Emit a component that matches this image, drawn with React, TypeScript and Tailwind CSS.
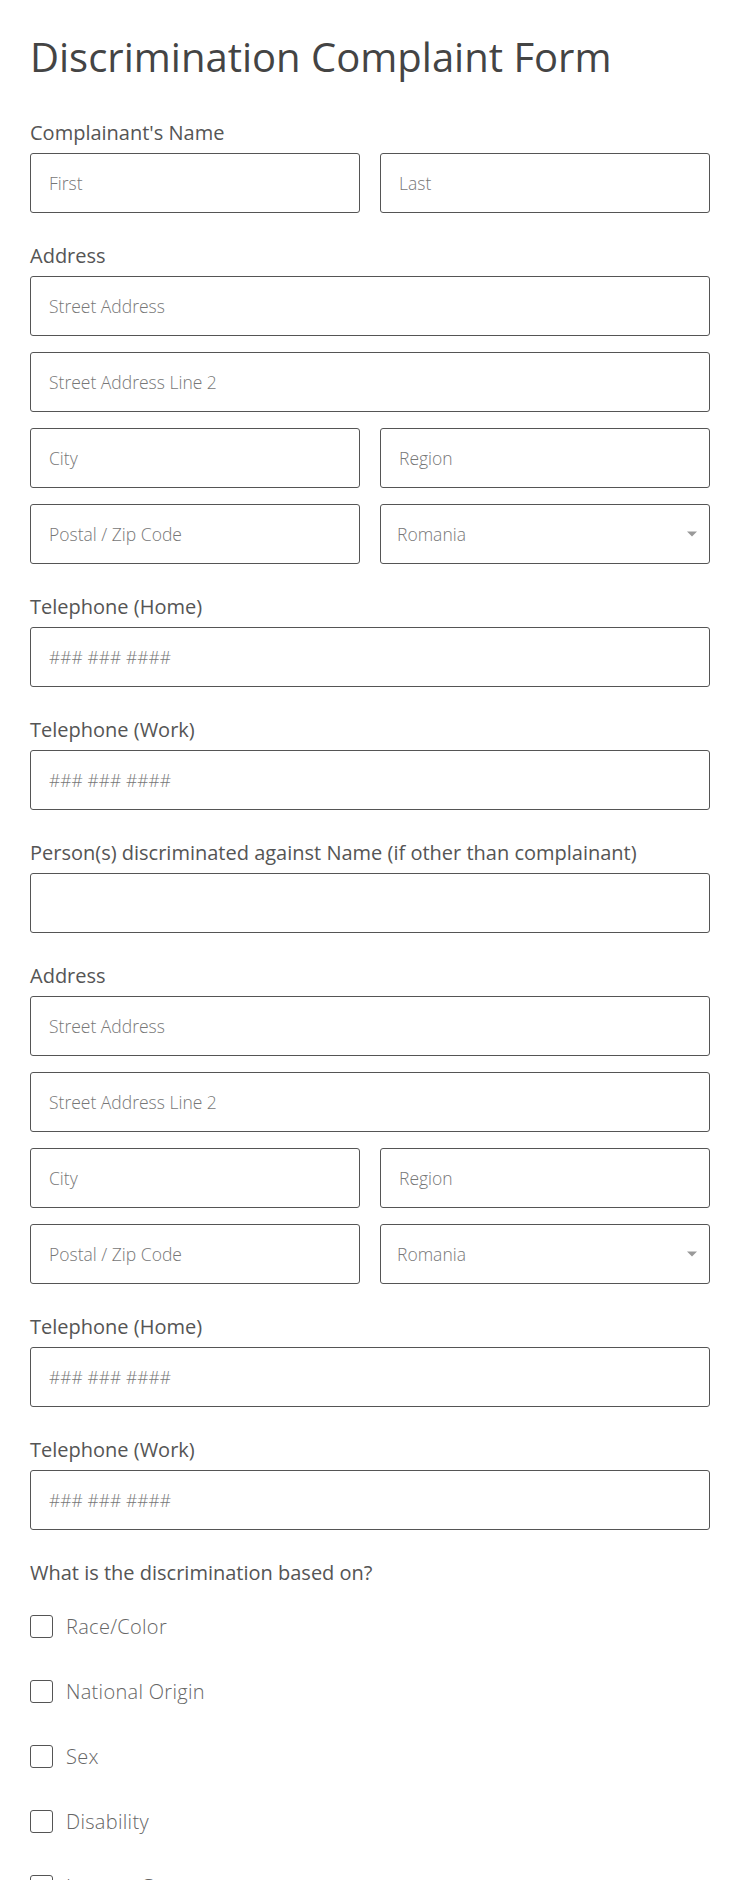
import React from 'react';

const labelFont = { fontFamily: '"Open Sans", "Noto Sans", sans-serif' };

const Label: React.FC<{ children: React.ReactNode }> = ({ children }) => (
  <div className="text-[20px] leading-6 text-[#555] mb-[8px]" style={labelFont}>
    {children}
  </div>
);

const Input: React.FC<{ placeholder?: string }> = ({ placeholder }) => (
  <input
    type="text"
    placeholder={placeholder}
    className="w-full h-[60px] px-[18px] border border-[#555] rounded-[3px] bg-white text-[17.5px] font-light text-[#555] placeholder:text-[#777] outline-none"
    style={labelFont}
  />
);

const CountrySelect: React.FC = () => (
  <div className="relative">
    <select
      defaultValue="Romania"
      className="w-full h-[60px] px-[16px] border border-[#555] rounded-[3px] bg-white text-[17.5px] font-light text-[#777] appearance-none outline-none"
      style={labelFont}
    >
      <option>Romania</option>
    </select>
    <span className="absolute right-[13px] top-1/2 -translate-y-1/2 w-0 h-0 border-l-[5px] border-r-[5px] border-t-[5px] border-l-transparent border-r-transparent border-t-[#999]" />
  </div>
);

const AddressBlock: React.FC = () => (
  <div className="flex flex-col gap-[16px]">
    <Input placeholder="Street Address" />
    <Input placeholder="Street Address Line 2" />
    <div className="grid grid-cols-2 gap-5">
      <Input placeholder="City" />
      <Input placeholder="Region" />
    </div>
    <div className="grid grid-cols-2 gap-5">
      <Input placeholder="Postal / Zip Code" />
      <CountrySelect />
    </div>
  </div>
);

const Field: React.FC<{ label: string; children: React.ReactNode }> = ({ label, children }) => (
  <div>
    <Label>{label}</Label>
    {children}
  </div>
);

export default function App() {
  const bases = ['Race/Color', 'National Origin', 'Sex', 'Disability', 'Income Group'];

  return (
    <div className="w-[740px] min-h-[1880px] bg-white px-[30px] pt-[28px]">
      <h1
        className="text-[40px] leading-[58px] text-[#444] mb-[35px]"
        style={{ fontFamily: '"Open Sans", sans-serif', fontWeight: 400 }}
      >
        Discrimination Complaint Form
      </h1>

      <div className="flex flex-col gap-[31px]">
        <Field label="Complainant's Name">
          <div className="grid grid-cols-2 gap-5">
            <Input placeholder="First" />
            <Input placeholder="Last" />
          </div>
        </Field>

        <Field label="Address">
          <AddressBlock />
        </Field>

        <Field label="Telephone (Home)">
          <Input placeholder="### ### ####" />
        </Field>

        <Field label="Telephone (Work)">
          <Input placeholder="### ### ####" />
        </Field>

        <Field label="Person(s) discriminated against Name (if other than complainant)">
          <Input />
        </Field>

        <Field label="Address">
          <AddressBlock />
        </Field>

        <Field label="Telephone (Home)">
          <Input placeholder="### ### ####" />
        </Field>

        <Field label="Telephone (Work)">
          <Input placeholder="### ### ####" />
        </Field>

        <div>
          <div className="text-[20px] leading-6 text-[#555]" style={labelFont}>
            What is the discrimination based on?
          </div>
          <div className="flex flex-col gap-[42px] mt-[30px]">
            {bases.map((b) => (
              <label key={b} className="flex items-center gap-[13px]">
                <span className="w-[23px] h-[23px] border border-[#555] rounded-[3px] bg-white shrink-0" />
                <span className="text-[20px] leading-[23px] font-light text-[#666] tracking-[0.3px]" style={labelFont}>
                  {b}
                </span>
              </label>
            ))}
          </div>
        </div>
      </div>
    </div>
  );
}
